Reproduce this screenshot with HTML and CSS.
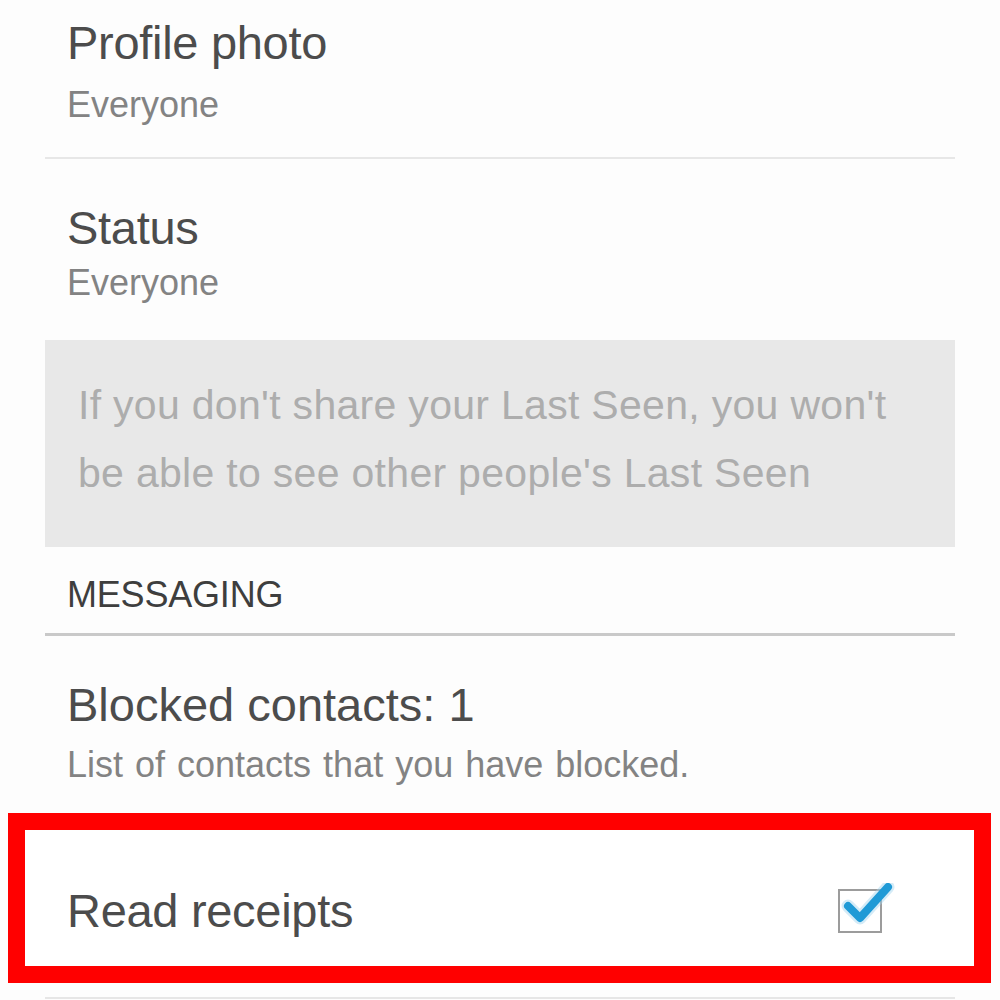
FILE: index.html
```html
<!DOCTYPE html>
<html lang="en">
<head>
<meta charset="utf-8">
<title>Privacy settings</title>
<link rel="stylesheet" href="styles.css">
</head>
<body>
<main class="settings">
  <section class="item item-divided">
    <div class="item-title">Profile photo</div>
    <div class="item-sub">Everyone</div>
  </section>
  <section class="item item-status">
    <div class="item-title">Status</div>
    <div class="item-sub">Everyone</div>
  </section>
  <div class="note">
    <p class="note-text">If you don't share your Last Seen, you won't be able to see other people's Last Seen</p>
  </div>
  <h2 class="section-header">MESSAGING</h2>
  <section class="item item-blocked">
    <div class="item-title">Blocked contacts: 1</div>
    <div class="item-sub">List of contacts that you have blocked.</div>
  </section>
  <div class="highlight">
    <div class="toggle-row">
      <span class="item-title">Read receipts</span>
      <svg class="checkbox" width="58" height="52" viewBox="0 0 58 52" aria-hidden="true">
        <rect x="1" y="7" width="42" height="42" fill="#ffffff" stroke="#9c9c9c" stroke-width="2"/>
        <path d="M10 23 L22 35 L50 4" fill="none" stroke="#9fd3ee" stroke-width="13" stroke-linecap="round" stroke-linejoin="round" opacity="0.45"/>
        <path d="M10 23 L22 35 L50 4" fill="none" stroke="#1f9ad6" stroke-width="8" stroke-linecap="round" stroke-linejoin="round"/>
      </svg>
    </div>
  </div>
  <div class="bottom-rule"></div>
</main>
</body>
</html>
```
FILE: styles.css
```css
html, body {
  margin: 0;
  padding: 0;
  background: #fdfdfd;
}

body {
  font-family: "Liberation Sans", Arial, Helvetica, sans-serif;
  color: #4a4a4a;
  overflow: hidden;
}

.settings {
  padding: 0 45px;
}

.item {
  padding-left: 22px;
}

.item-title {
  font-size: 47px;
  line-height: 47px;
  color: #4c4c4c;
  letter-spacing: -0.3px;
}

.item-sub {
  font-size: 36px;
  line-height: 34px;
  color: #838383;
  word-spacing: 2px;
}

.item-divided {
  padding-top: 19px;
  padding-bottom: 35px;
  border-bottom: 2px solid #e7e7e7;
}

.item-divided .item-sub {
  margin-top: 22px;
}

.item-status {
  padding-top: 45px;
}

.item-status .item-sub {
  margin-top: 15px;
}

.note {
  margin-top: 40px;
  background: #e8e8e8;
  padding: 31px 40px 40px 33px;
}

.note-text {
  margin: 0;
  font-size: 41px;
  line-height: 68px;
  color: #adadad;
  letter-spacing: 0.3px;
}

.section-header {
  margin: 30px 0 0;
  padding: 0 0 20px 22px;
  font-weight: normal;
  font-size: 36px;
  line-height: 36px;
  color: #3e3e3e;
  letter-spacing: -0.2px;
  border-bottom: 3px solid #c9c9c9;
}

.item-blocked {
  padding-top: 45px;
}

.item-blocked .item-title {
  letter-spacing: 0;
}

.item-blocked .item-sub {
  margin-top: 20px;
}

.highlight {
  margin: 31px -36px 0 -37px;
  border: 17px solid #ff0000;
  background: #ffffff;
}

.toggle-row {
  height: 112px;
  padding: 24px 78px 0 42px;
  display: flex;
  align-items: center;
  justify-content: space-between;
}

.checkbox {
  display: block;
  margin-top: -2px;
}

.bottom-rule {
  margin-top: 14px;
  border-top: 2px solid #e6e6e6;
}
```
